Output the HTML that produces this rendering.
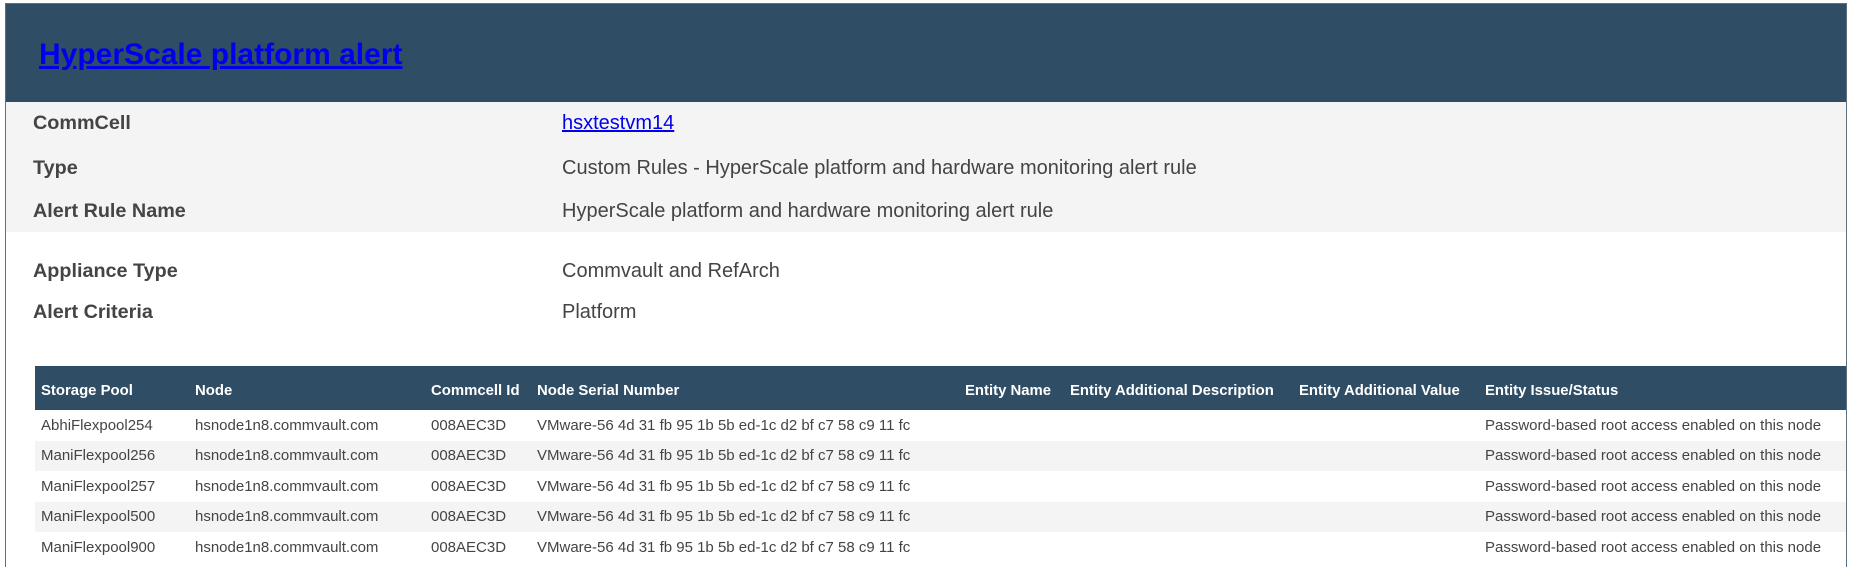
<!DOCTYPE html>
<html><head><meta charset="utf-8"><style>
*{margin:0;padding:0;box-sizing:border-box}
html,body{width:1852px;height:567px;overflow:hidden}
body{background:#fff;font-family:"Liberation Sans",Arial,sans-serif;color:#444;position:relative}
.frame{position:absolute;left:5px;top:3px;width:1842px;height:570px;border:1px solid #5a6f80}
.hdr{position:absolute;left:6px;top:4px;width:1840px;height:98px;background:#2f4d65}
.hdr a{position:absolute;left:33px;top:34px;font-size:30px;font-weight:bold;color:#0000ee;text-decoration:underline}
.grey{position:absolute;left:6px;top:102px;width:1840px;height:130px;background:#f4f4f4}
.l{position:absolute;left:33px;font-size:19.8px;font-weight:bold;color:#444}
.v{position:absolute;left:562px;font-size:20px;color:#444}
.v a{color:#0000ee}
table{position:absolute;left:35px;top:366px;width:1811px;border-collapse:collapse;font-size:15px}
th{background:#2f4d65;color:#fff;text-align:left;height:44px;padding:6px 0 0 6px;font-weight:bold;white-space:nowrap;font-size:14.9px}
td{height:30.5px;padding:0 0 0 6px;white-space:nowrap;color:#444}
tbody tr:nth-child(even) td{background:#f4f4f4}
</style></head><body>
<div class="frame"></div>
<div class="hdr"><a>HyperScale platform alert</a></div>
<div class="grey"></div>
<div class="l" style="top:112px">CommCell</div><div class="v" style="top:112px"><a><u>hsxtestvm14</u></a></div>
<div class="l" style="top:157px">Type</div><div class="v" style="top:157px">Custom Rules - HyperScale platform and hardware monitoring alert rule</div>
<div class="l" style="top:200px">Alert Rule Name</div><div class="v" style="top:200px">HyperScale platform and hardware monitoring alert rule</div>
<div class="l" style="top:260px">Appliance Type</div><div class="v" style="top:260px">Commvault and RefArch</div>
<div class="l" style="top:301px">Alert Criteria</div><div class="v" style="top:301px">Platform</div>
<table>
<colgroup><col style="width:154px"><col style="width:236px"><col style="width:106px"><col style="width:428px"><col style="width:105px"><col style="width:229px"><col style="width:186px"><col></colgroup>
<thead><tr><th>Storage Pool</th><th>Node</th><th>Commcell Id</th><th>Node Serial Number</th><th>Entity Name</th><th>Entity Additional Description</th><th>Entity Additional Value</th><th>Entity Issue/Status</th></tr></thead>
<tbody>
<tr><td>AbhiFlexpool254</td><td>hsnode1n8.commvault.com</td><td>008AEC3D</td><td>VMware-56 4d 31 fb 95 1b 5b ed-1c d2 bf c7 58 c9 11 fc</td><td></td><td></td><td></td><td>Password-based root access enabled on this node</td></tr>
<tr><td>ManiFlexpool256</td><td>hsnode1n8.commvault.com</td><td>008AEC3D</td><td>VMware-56 4d 31 fb 95 1b 5b ed-1c d2 bf c7 58 c9 11 fc</td><td></td><td></td><td></td><td>Password-based root access enabled on this node</td></tr>
<tr><td>ManiFlexpool257</td><td>hsnode1n8.commvault.com</td><td>008AEC3D</td><td>VMware-56 4d 31 fb 95 1b 5b ed-1c d2 bf c7 58 c9 11 fc</td><td></td><td></td><td></td><td>Password-based root access enabled on this node</td></tr>
<tr><td>ManiFlexpool500</td><td>hsnode1n8.commvault.com</td><td>008AEC3D</td><td>VMware-56 4d 31 fb 95 1b 5b ed-1c d2 bf c7 58 c9 11 fc</td><td></td><td></td><td></td><td>Password-based root access enabled on this node</td></tr>
<tr><td>ManiFlexpool900</td><td>hsnode1n8.commvault.com</td><td>008AEC3D</td><td>VMware-56 4d 31 fb 95 1b 5b ed-1c d2 bf c7 58 c9 11 fc</td><td></td><td></td><td></td><td>Password-based root access enabled on this node</td></tr>
</tbody></table>
</body></html>
